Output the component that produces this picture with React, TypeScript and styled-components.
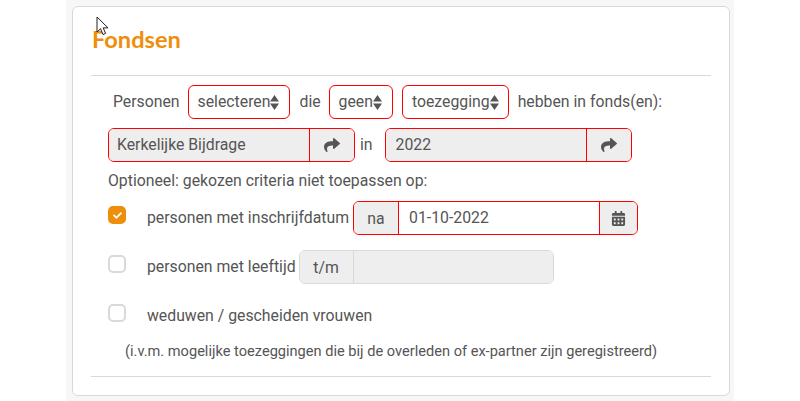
import React from "react";
import styled, { createGlobalStyle } from "styled-components";
import { FaShare, FaCalendarAlt, FaCheck } from "react-icons/fa";

const Global = createGlobalStyle`
  html, body { margin: 0; padding: 0; background: #fff; }
  body { font-family: Roboto, "Liberation Sans", sans-serif; color: #555; font-size: 15.8px; }
`;

const Page = styled.div`
  width: 668px; height: 401px; margin-left: 66px; background: #f7f7f7;
  padding: 6px; box-sizing: border-box; position: relative; overflow: hidden;
`;
const Card = styled.div`
  width: 658px; height: 390px; box-sizing: border-box; background: #fff;
  border: 1px solid #d9d9d9; border-radius: 6px; padding: 0 18px;
`;
const Title = styled.h2`
  margin: 0; height: 68px; box-sizing: border-box; padding: 18px 0 0 1px;
  font: 700 23.6px/28px Lato, "Noto Sans", sans-serif; color: #ef8e0b;
`;
const Divider = styled.hr<{ $top?: number }>`
  margin: ${p => p.$top ?? 0}px 0 0; border: 0; border-top: 1px solid #d9d9d9;
`;
const Row = styled.div<{ $top: number; $left: number; $gap?: number }>`
  display: flex; align-items: center; height: 34px;
  margin-top: ${p => p.$top}px; margin-left: ${p => p.$left}px;
  gap: ${p => p.$gap ?? 9}px; white-space: nowrap;
`;
const Word = styled.span<{ $tight?: boolean }>`
  margin-top: -2px;
  margin-right: ${p => (p.$tight ? -1 : 0)}px;
`;
const Select = styled.div<{ $wide?: boolean }>`
  height: 34px; box-sizing: border-box; border: 1px solid #f00; border-radius: 6px;
  display: flex; align-items: center; background: #fff;
  padding: 0 ${p => (p.$wide ? 10 : 9)}px 2px 9px;
`;
const Arrows = styled.svg`
  width: 9px; height: 17px; fill: #555; display: block; flex: none; margin-bottom: -2px;
`;
const SelectArrows = () => (
  <Arrows viewBox="0 0 9 17"><path d="M4.5 1 9 7.5H0zM0 9.5h9L4.5 16z" /></Arrows>
);
const Group = styled.div<{ $width: number; $plain?: boolean; $offset?: number }>`
  width: ${p => p.$width}px; height: 34px; box-sizing: border-box; display: flex; flex: none;
  margin-left: ${p => p.$offset ?? 0}px;
  border: 1px solid ${p => (p.$plain ? "#d9d9d9" : "#f00")}; border-radius: 6px; overflow: hidden;
`;
const Field = styled.div<{ $filled?: boolean; $pad?: number }>`
  flex: 1; display: flex; align-items: center; padding: 0 0 2px ${p => p.$pad ?? 8}px;
  background: ${p => (p.$filled ? "#eee" : "#fff")};
`;
const Addon = styled.div<{ $width: number; $side: "left" | "right"; $plain?: boolean }>`
  width: ${p => p.$width}px; flex: none; box-sizing: border-box; background: #eee;
  display: flex; align-items: center; justify-content: center; color: #555;
  border-${p => p.$side}: 1px solid ${p => (p.$plain ? "#d9d9d9" : "#f00")};
`;
const Optional = styled.div`
  margin: 9px 0 0 17px; height: 20px; line-height: 20px;
`;
const Box = styled.div<{ $checked?: boolean }>`
  width: 18px; height: 18px; box-sizing: border-box; border-radius: 5px; flex: none;
  border: 2px solid ${p => (p.$checked ? "#ef8e0b" : "#d9d9d9")};
  background: ${p => (p.$checked ? "#ef8e0b" : "#fff")};
  color: #fff; display: flex; align-items: center; justify-content: center; font-size: 9px;
  margin-top: -6px;
`;
const OptionLabel = styled.span<{ $after?: number }>`
  margin: -2px ${p => p.$after ?? 4}px 0 21px;
`;
const Note = styled.div`
  margin: 7px 0 0 34px; height: 22px; line-height: 22px; font-size: 14.6px; white-space: nowrap;
`;
const Cursor = styled.svg`
  position: absolute; left: 30px; top: 16px; width: 13px; height: 20px;
`;

export default function App() {
  return (
    <>
      <Global />
      <Page>
        <Card>
          <Title>Fondsen</Title>
          <Divider />
          <Row $top={9} $left={22}>
            <Word $tight>Personen</Word>
            <Select $wide>selecteren<SelectArrows /></Select>
            <Word $tight>die</Word>
            <Select $wide>geen<SelectArrows /></Select>
            <Select>toezegging<SelectArrows /></Select>
            <Word>hebben in fonds(en):</Word>
          </Row>
          <Row $top={9} $left={17} $gap={5}>
            <Group $width={247}>
              <Field $filled>Kerkelijke Bijdrage</Field>
              <Addon $width={45} $side="left"><FaShare size={16} /></Addon>
            </Group>
            <Word>in</Word>
            <Group $width={247} $offset={7}>
              <Field $filled $pad={10}>2022</Field>
              <Addon $width={45} $side="left"><FaShare size={16} /></Addon>
            </Group>
          </Row>
          <Optional>Optioneel: gekozen criteria niet toepassen op:</Optional>
          <Row $top={10} $left={17} $gap={0}>
            <Box $checked><FaCheck /></Box>
            <OptionLabel>personen met inschrijfdatum</OptionLabel>
            <Group $width={285}>
              <Addon $width={45} $side="right">na</Addon>
              <Field $pad={10}>01-10-2022</Field>
              <Addon $width={38} $side="left"><FaCalendarAlt size={15} /></Addon>
            </Group>
          </Row>
          <Row $top={15} $left={17} $gap={0}>
            <Box />
            <OptionLabel $after={3}>personen met leeftijd</OptionLabel>
            <Group $width={255} $plain>
              <Addon $width={54} $side="right" $plain>t/m</Addon>
              <Field $filled />
            </Group>
          </Row>
          <Row $top={15} $left={17} $gap={0}>
            <Box />
            <OptionLabel>weduwen / gescheiden vrouwen</OptionLabel>
          </Row>
          <Note>(i.v.m. mogelijke toezeggingen die bij de overleden of ex-partner zijn geregistreerd)</Note>
          <Divider $top={14} />
        </Card>
        <Cursor viewBox="0 0 13 20">
          <path d="M1 1v15l3.5-3.3L7 18.5l2.6-1.1-2.4-5.5H12z" fill="#fff" stroke="#222" strokeWidth="1" />
        </Cursor>
      </Page>
    </>
  );
}
